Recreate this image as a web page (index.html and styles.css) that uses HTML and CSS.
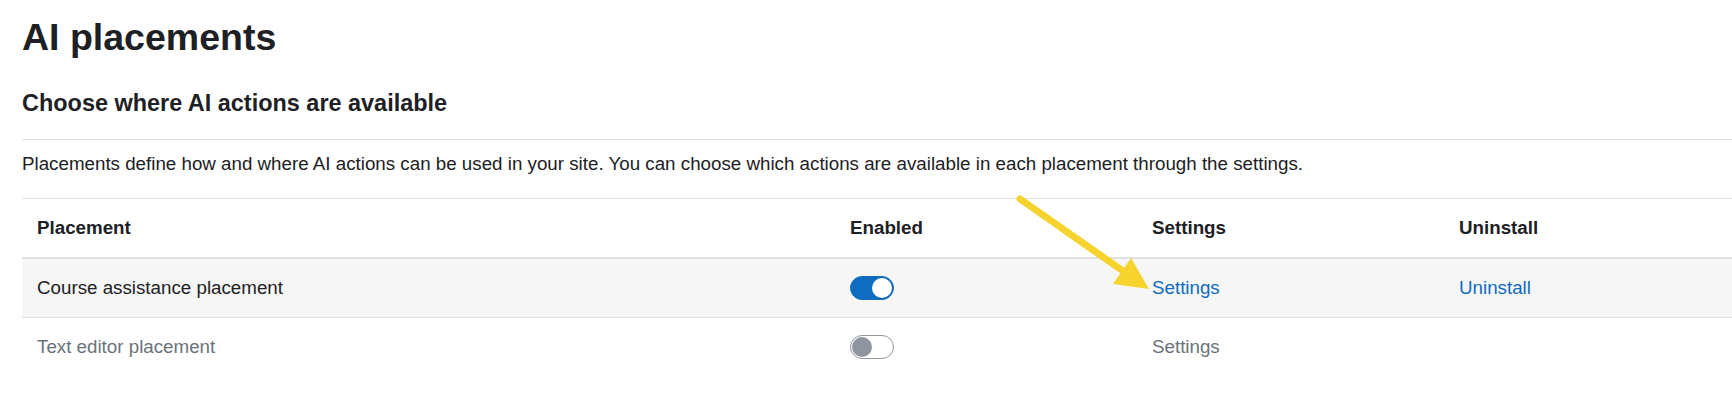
FILE: index.html
```html
<!DOCTYPE html>
<html lang="en">
<head>
<meta charset="utf-8">
<title>AI placements</title>
<link rel="stylesheet" href="styles.css">
</head>
<body>
<div class="page">
  <h2 class="title">AI placements</h2>
  <h3 class="subtitle">Choose where AI actions are available</h3>
  <hr class="rule">
  <p class="intro">Placements define how and where AI actions can be used in your site. You can choose which actions are available in each placement through the settings.</p>
  <table class="ptable">
    <thead>
      <tr>
        <th class="c1">Placement</th>
        <th class="c2">Enabled</th>
        <th class="c3">Settings</th>
        <th class="c4">Uninstall</th>
      </tr>
    </thead>
    <tbody>
      <tr class="striped">
        <td>Course assistance placement</td>
        <td><span class="toggle on"><span class="knob"></span></span></td>
        <td><a class="link" href="#">Settings</a></td>
        <td><a class="link" href="#">Uninstall</a></td>
      </tr>
      <tr class="muted">
        <td>Text editor placement</td>
        <td><span class="toggle off"><span class="knob"></span></span></td>
        <td>Settings</td>
        <td></td>
      </tr>
    </tbody>
  </table>
  <svg class="arrow" width="1732" height="402" viewBox="0 0 1732 402" xmlns="http://www.w3.org/2000/svg">
    <line x1="1020" y1="199" x2="1123" y2="271" stroke="#f6d32d" stroke-width="7" stroke-linecap="round"/>
    <polygon points="1149,289 1113,284 1131,258" fill="#f6d32d"/>
  </svg>
</div>
</body>
</html>
```
FILE: styles.css
```css
html, body {
  margin: 0;
  padding: 0;
  background: #ffffff;
}
body {
  font-family: "Liberation Sans", Arial, sans-serif;
  color: #1d2125;
  font-size: 18.75px;
  line-height: 1.5;
}
.page {
  position: relative;
  padding: 14.5px 0 0 22px;
  height: 402px;
  box-sizing: border-box;
  overflow: hidden;
}
.title {
  margin: 0;
  font-size: 37.5px;
  line-height: 45px;
  font-weight: 700;
}
.subtitle {
  margin: 29.5px 0 0 0;
  font-size: 23.44px;
  line-height: 28px;
  font-weight: 700;
}
.rule {
  margin: 22px 0 0 0;
  border: 0;
  border-top: 1px solid #dee2e6;
  height: 0;
}
.intro {
  margin: 10px 0 20px 0;
  line-height: 28px;
}
.ptable {
  width: 1710px;
  border-collapse: collapse;
  table-layout: fixed;
}
.ptable th,
.ptable td {
  padding: 15px;
  text-align: left;
  vertical-align: middle;
  line-height: 28px;
  border-top: 1px solid #dee2e6;
}
.ptable th {
  font-weight: 700;
  border-bottom: 2px solid #dee2e6;
}
.c1 { width: 783px; }
.c2 { width: 272px; }
.c3 { width: 277px; }
.striped td {
  background: #f6f6f6;
}
.muted td {
  color: #6a737b;
}
.link {
  color: #0f6cbf;
  text-decoration: none;
}
.toggle {
  display: flex;
  align-items: center;
  width: 44px;
  height: 24px;
  border-radius: 12px;
  box-sizing: border-box;
  padding: 0 1px;
}
.toggle .knob {
  width: 20px;
  height: 20px;
  border-radius: 50%;
}
.toggle.on {
  background: #0f6cbf;
  border: 1px solid #0f6cbf;
  justify-content: flex-end;
}
.toggle.on .knob {
  background: #ffffff;
}
.toggle.off {
  background: #ffffff;
  border: 1px solid #8f959e;
  justify-content: flex-start;
}
.toggle.off .knob {
  background: #8f959e;
}
.arrow {
  position: absolute;
  left: 0;
  top: 0;
  pointer-events: none;
}
```
